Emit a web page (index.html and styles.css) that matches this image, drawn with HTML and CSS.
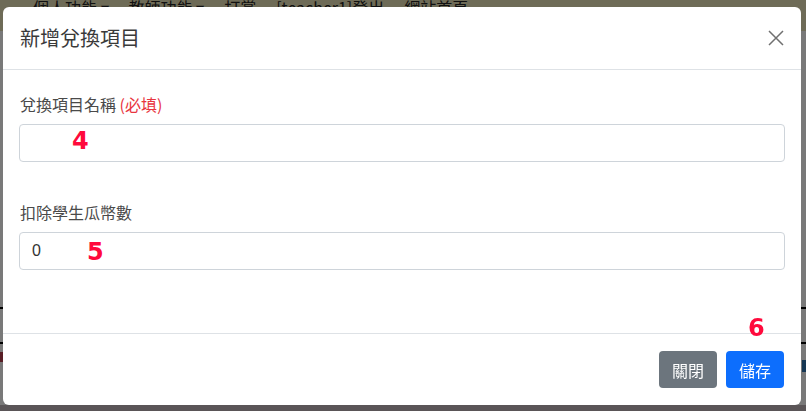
FILE: index.html
```html
<!DOCTYPE html>
<html>
<head lang="zh-Hant">
    <meta charset="UTF-8">
    <title>新增兌換項目</title>
    <link rel="stylesheet" href="styles.css">
</head>
<body>
    <div class="page">
        <div class="navbar">
            <span class="nav-item">個人功能 ▾</span>
            <span class="nav-item">教師功能 ▾</span>
            <span class="nav-item">打賞</span>
            <span class="nav-item">[teacher1]登出</span>
            <span class="nav-item">網站首頁</span>
        </div>
        <div class="content">
            <div class="row-line"></div>
            <div class="row-line"><span class="tag-red"></span><span class="tag-blue"></span></div>
        </div>
        <div class="footer"></div>
    </div>

    <div class="backdrop"></div>

    <div class="modal">
        <div class="modal-header">
            <h5 class="modal-title">新增兌換項目</h5>
            <button class="btn-close" type="button">
                <svg width="16" height="16" viewBox="0 0 16 16">
                    <path d="M1 1L15 15M15 1L1 15" stroke="#707070" stroke-width="1.5" fill="none"/>
                </svg>
            </button>
        </div>
        <div class="modal-body">
            <div class="form-group">
                <label class="form-label">兌換項目名稱 <span class="required">(必填)</span></label>
                <input class="form-control" type="text" value="">
                <span class="mark mark-4">4</span>
            </div>
            <div class="form-group">
                <label class="form-label">扣除學生瓜幣數</label>
                <input class="form-control" type="text" value="0">
                <span class="mark mark-5">5</span>
            </div>
        </div>
        <div class="modal-footer">
            <span class="mark mark-6">6</span>
            <button class="btn btn-secondary" type="button">關閉</button>
            <button class="btn btn-primary" type="button">儲存</button>
        </div>
    </div>
</body>
</html>
```

FILE: styles.css
```css
*{
    margin: 0;
    padding: 0;
    box-sizing: border-box;
}
body{
    font-family: "Noto Sans CJK TC", "Liberation Sans", sans-serif;
    background: #f2f2f2;
    height: 411px;
    overflow: hidden;
}
.page{
    margin-top: -18px;
}
.navbar{
    height: 49px;
    background: #dcd6ae;
    display: flex;
    align-items: center;
    padding-left: 33px;
    gap: 20px;
    font-size: 16px;
    color: #222;
}
.content{
    height: 374px;
    padding-top: 276px;
}
.row-line{
    height: 35px;
    border-top: 2px solid #000;
}
.tag-red{
    display: block;
    width: 6px;
    height: 10px;
    background: #b13a4a;
    margin-top: 8px;
}
.tag-blue{
    display: block;
    width: 4px;
    height: 12px;
    background: #2c6ea8;
    margin-left: 802px;
    margin-top: -2px;
}
.footer{
    height: 20px;
    background: #b4aaae;
}
.backdrop{
    position: fixed;
    left: 0;
    top: 0;
    right: 0;
    bottom: 0;
    background: rgba(0, 0, 0, 0.5);
}
.modal{
    position: fixed;
    left: 3px;
    top: 7px;
    width: 798px;
    height: 398px;
    background: #fff;
    border-radius: 6px;
    display: flex;
    flex-direction: column;
}
.modal-header{
    display: flex;
    align-items: center;
    justify-content: space-between;
    padding: 16px 16px 16px 17px;
    border-bottom: 1px solid #dee2e6;
}
.modal-title{
    font-size: 20px;
    font-weight: 400;
    line-height: 30px;
    color: #3a3a3a;
}
.btn-close{
    border: 0;
    background: none;
    width: 16px;
    height: 16px;
    margin-right: 1px;
    display: flex;
}
.modal-body{
    flex: 1;
    padding: 22px 16px 0 16px;
}
.form-group{
    position: relative;
    margin-bottom: 38px;
}
.form-label{
    display: block;
    font-size: 16px;
    line-height: 24px;
    margin-bottom: 8px;
    padding-left: 1px;
    color: #4a4a4a;
}
.required{
    color: #e8353f;
}
.form-control{
    display: block;
    width: 100%;
    height: 38px;
    padding: 6px 12px;
    font-size: 16px;
    font-family: "Liberation Sans", sans-serif;
    color: #333;
    border: 1px solid #ced4da;
    border-radius: 4px;
    outline: none;
}
.mark{
    position: absolute;
    font-family: "DejaVu Sans", sans-serif;
    font-weight: bold;
    font-size: 24px;
    line-height: 1;
    color: #ff0a3c;
}
.mark-4{
    left: 53px;
    top: 37px;
}
.mark-5{
    left: 68px;
    top: 40px;
}
.mark-6{
    left: 745px;
    top: -18px;
}
.modal-footer{
    position: relative;
    display: flex;
    justify-content: flex-end;
    padding: 17px 17px 17px;
    gap: 9px;
    border-top: 1px solid #dee2e6;
}
.btn{
    height: 37px;
    padding: 0 13px;
    border: 0;
    border-radius: 4px;
    font-size: 16px;
    font-family: "Noto Sans CJK TC", sans-serif;
    color: #fff;
}
.btn-secondary{
    background: #6c757d;
}
.btn-primary{
    background: #0d6efd;
}
```
